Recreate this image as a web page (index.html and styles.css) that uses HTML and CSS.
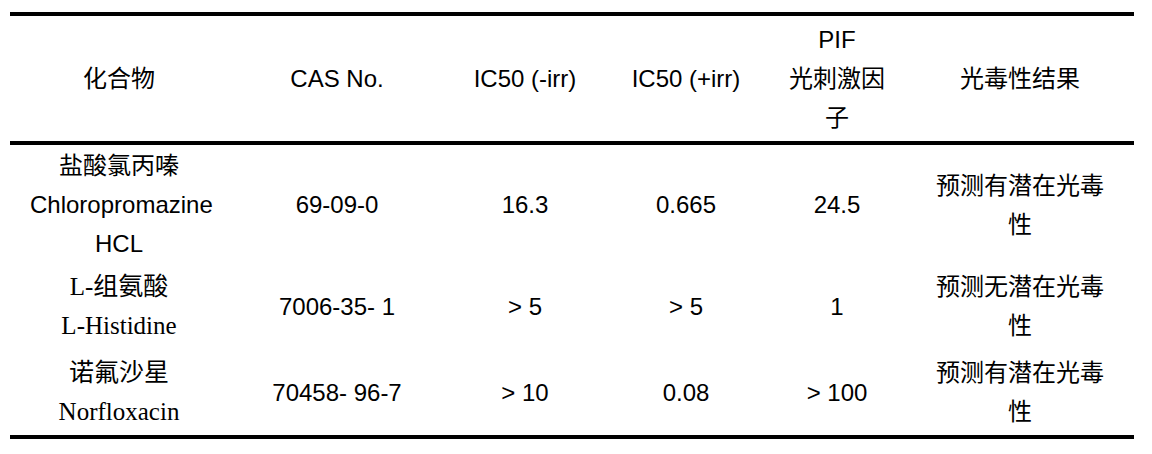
FILE: index.html
```html
<!DOCTYPE html>
<html lang="zh-CN">
<head>
    <meta charset="UTF-8">
    <meta name="viewport" content="width=device-width, initial-scale=1.0">
    <title>光毒性结果</title>
    <link rel="stylesheet" href="styles.css">
</head>
<body>
    <div class="page">
        <table class="result-table">
            <colgroup>
                <col class="col-name">
                <col class="col-cas">
                <col class="col-minus">
                <col class="col-plus">
                <col class="col-pif">
                <col class="col-result">
            </colgroup>
            <thead>
                <tr>
                    <th>化合物</th>
                    <th>CAS No.</th>
                    <th>IC50 (-irr)</th>
                    <th>IC50 (+irr)</th>
                    <th>PIF<br>光刺激因子</th>
                    <th>光毒性结果</th>
                </tr>
            </thead>
            <tbody>
                <tr class="row-tall">
                    <td>盐酸氯丙嗪<br>Chloropromazine<br>HCL</td>
                    <td>69-09-0</td>
                    <td>16.3</td>
                    <td>0.665</td>
                    <td>24.5</td>
                    <td>预测有潜在光毒性</td>
                </tr>
                <tr>
                    <td class="serif">L-组氨酸<br>L-Histidine</td>
                    <td>7006-35- 1</td>
                    <td>&gt; 5</td>
                    <td>&gt; 5</td>
                    <td>1</td>
                    <td>预测无潜在光毒性</td>
                </tr>
                <tr class="row-last">
                    <td class="serif">诺氟沙星<br>Norfloxacin</td>
                    <td>70458- 96-7</td>
                    <td>&gt; 10</td>
                    <td>0.08</td>
                    <td>&gt; 100</td>
                    <td>预测有潜在光毒性</td>
                </tr>
            </tbody>
        </table>
    </div>
</body>
</html>
```

FILE: styles.css
```css
* {
    margin: 0;
    padding: 0;
    box-sizing: border-box;
}

body {
    background-color: #ffffff;
    color: #000000;
    font-family: "Liberation Sans", "Noto Sans CJK SC", sans-serif;
}

.page {
    padding: 12px 0 0 10px;
}

.result-table {
    width: 1124px;
    table-layout: fixed;
    border-collapse: separate;
    border-spacing: 0;
    font-size: 24px;
    line-height: 39px;
}

.col-name { width: 218px; }
.col-cas { width: 218px; }
.col-minus { width: 158px; }
.col-plus { width: 164px; }
.col-pif { width: 138px; }
.col-result { width: 228px; }

th, td {
    text-align: center;
    vertical-align: middle;
    font-weight: normal;
    padding: 4px 20px;
}

th {
    border-top: 4px solid #000000;
    border-bottom: 4px solid #000000;
    height: 133px;
}

.row-tall td {
    padding-top: 1px;
    padding-bottom: 0;
}

.row-last td {
    border-bottom: 4px solid #000000;
}

.serif {
    font-family: "Liberation Serif", "Noto Sans CJK SC", serif;
    font-size: 25px;
}
```
